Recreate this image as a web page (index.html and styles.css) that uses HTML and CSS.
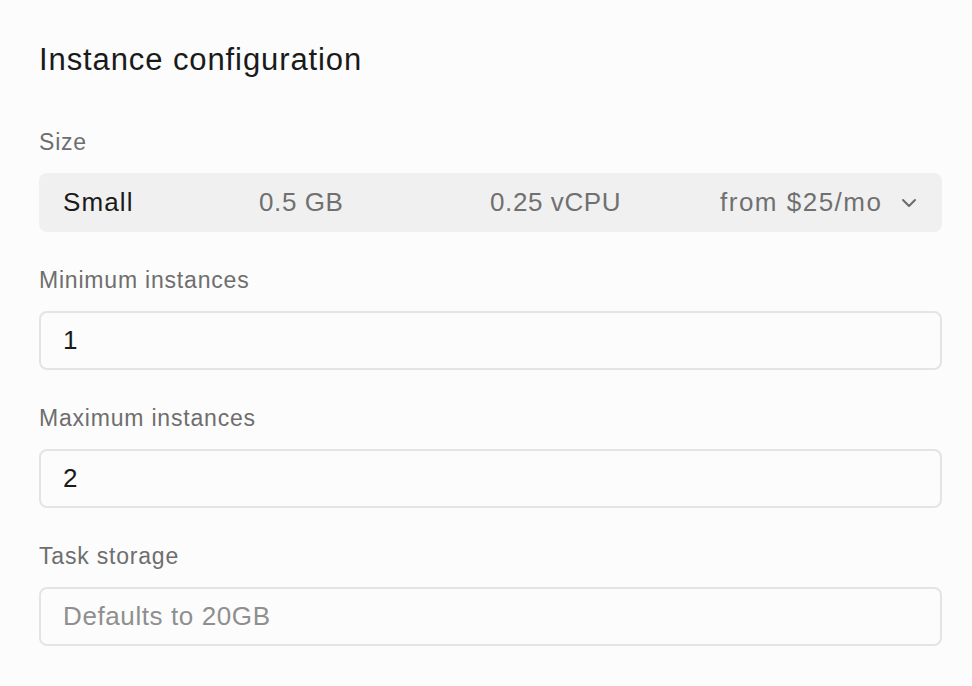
FILE: index.html
```html
<!DOCTYPE html>
<html lang="en">

<head>
    <meta charset="UTF-8">
    <meta name="viewport" content="width=device-width, initial-scale=1.0">
    <title>Instance configuration</title>
    <link rel="stylesheet" href="styles.css">
</head>

<body>
    <div class="panel">
        <h1 class="title">Instance configuration</h1>

        <div class="field">
            <label class="fieldLabel">Size</label>
            <div class="sizeSelect">
                <span class="sizeName">Small</span>
                <span class="sizeInfo">0.5 GB</span>
                <span class="sizeInfo">0.25 vCPU</span>
                <span class="sizeInfo sizePrice">from $25/mo</span>
                <svg class="chevron" width="16" height="16" viewBox="0 0 16 16">
                    <path d="M2 5 L8 11 L14 5" fill="none" stroke="#6b6b6b" stroke-width="2" stroke-linecap="round" stroke-linejoin="round"/>
                </svg>
            </div>
        </div>

        <div class="field">
            <label class="fieldLabel" for="minInst">Minimum instances</label>
            <input class="textInput" id="minInst" type="text" value="1">
        </div>

        <div class="field">
            <label class="fieldLabel" for="maxInst">Maximum instances</label>
            <input class="textInput" id="maxInst" type="text" value="2">
        </div>

        <div class="field">
            <label class="fieldLabel" for="storage">Task storage</label>
            <input class="textInput" id="storage" type="text" placeholder="Defaults to 20GB">
        </div>
    </div>
</body>

</html>
```

FILE: styles.css
```css
body {
    margin: 0;
    background: #fcfcfc;
    font-family: "Liberation Sans", Arial, sans-serif;
}
.panel {
    width: 903px;
    padding: 42px 0 0 39px;
}
.title {
    margin: 0 0 52px 0;
    font-size: 31px;
    line-height: 36px;
    letter-spacing: 0.9px;
    font-weight: 400;
    color: #1a1a1a;
}
.field {
    display: flex;
    flex-direction: column;
    gap: 19px;
    margin-bottom: 36px;
}
.fieldLabel {
    font-size: 23px;
    line-height: 24px;
    letter-spacing: 0.8px;
    color: #6e6e6e;
}
.sizeSelect {
    height: 59px;
    box-sizing: border-box;
    background: #f0f0f0;
    border-radius: 8px;
    padding: 0 25px 0 24px;
    display: grid;
    grid-template-columns: 196px 231px 230px 1fr 16px;
    align-items: center;
    font-size: 26px;
    letter-spacing: 0.6px;
    color: #707070;
}
.sizeName {
    color: #1a1a1a;
    letter-spacing: 1.1px;
}
.sizePrice {
    letter-spacing: 1.5px;
}
.chevron {
    display: block;
}
.textInput {
    height: 59px;
    box-sizing: border-box;
    border: 2px solid #e4e4e4;
    border-radius: 8px;
    background: #fcfcfc;
    padding: 0 22px;
    font-family: "Liberation Sans", Arial, sans-serif;
    font-size: 26px;
    letter-spacing: 0.6px;
    color: #1a1a1a;
    outline: none;
}
.textInput::placeholder {
    color: #8f8f8f;
}
```
